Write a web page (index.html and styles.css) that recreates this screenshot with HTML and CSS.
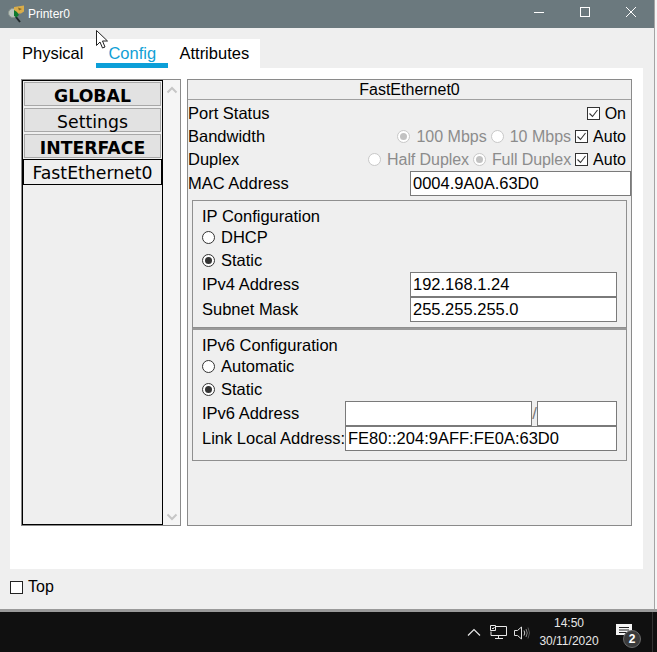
FILE: index.html
```html
<!DOCTYPE html>
<html lang="en">
<head>
<meta charset="utf-8">
<title>Printer0</title>
<link rel="stylesheet" href="styles.css">
</head>
<body>
<div class="screen">
  <div class="window">
    <header class="titlebar">
      <svg class="app-icon" width="20" height="20" viewBox="0 0 20 20">
        <circle cx="6" cy="9" r="4.500" fill="#b9c4bd" stroke="#8b958f"/>
        <path d="M9 13l4 5" stroke="#20282a" stroke-width="2"/>
        <path d="M7 3l10-1.500v6l-3 2h-5l-2-3z" fill="#d9ad4a"/>
        <path d="M11 3.500l4 1.500-3 1.500z" fill="#8a6a24"/>
        <path d="M7 6l3 2 2 3-3 2.500-2-2z" fill="#0e7a2c"/>
      </svg>
      <span class="title">Printer0</span>
      <div class="controls">
        <svg width="12" height="12" viewBox="0 0 12 12" class="ctl"><path d="M1 6.500h10" stroke="#fff" stroke-width="1"/></svg>
        <svg width="12" height="12" viewBox="0 0 12 12" class="ctl"><rect x="1.500" y="1.500" width="9" height="9" fill="none" stroke="#fff"/></svg>
        <svg width="12" height="12" viewBox="0 0 12 12" class="ctl"><path d="M1 1l10 10M11 1l-10 10" stroke="#fff" stroke-width="1"/></svg>
      </div>
    </header>
    <div class="client">
      <nav class="tabs">
        <span class="tab">Physical</span>
        <span class="tab tab-active">Config</span>
        <span class="tab">Attributes</span>
      </nav>
      <div class="page">
        <div class="sidebar">
          <div class="list">
            <div class="list-item list-head">GLOBAL</div>
            <div class="list-item">Settings</div>
            <div class="list-item list-head">INTERFACE</div>
            <div class="list-selected">FastEthernet0</div>
          </div>
          <div class="scroll">
            <svg width="12" height="8" viewBox="0 0 12 8"><path d="M1.500 6.500L6 2l4.500 4.500" fill="none" stroke="#c6c6c6" stroke-width="2"/></svg>
            <svg width="12" height="8" viewBox="0 0 12 8"><path d="M1.500 1.500L6 6l4.500-4.500" fill="none" stroke="#c6c6c6" stroke-width="2"/></svg>
          </div>
        </div>
        <section class="panel">
          <div class="panel-title">FastEthernet0</div>
          <div class="row row-top">
            <span class="label">Port Status</span>
            <span class="opts"><span class="check"><svg width="11" height="11" viewBox="0 0 11 11"><path d="M1.500 5.500l3 3 5-6.500" fill="none" stroke="#333" stroke-width="1.100"/></svg></span><span class="opt-text">On</span></span>
          </div>
          <div class="row">
            <span class="label">Bandwidth</span>
            <span class="opts">
              <span class="radio radio-off"></span><span class="dim">100 Mbps</span>
              <span class="radio"></span><span class="dim">10 Mbps</span>
              <span class="check"><svg width="11" height="11" viewBox="0 0 11 11"><path d="M1.500 5.500l3 3 5-6.500" fill="none" stroke="#333" stroke-width="1.100"/></svg></span><span class="opt-text">Auto</span>
            </span>
          </div>
          <div class="row row-duplex">
            <span class="label">Duplex</span>
            <span class="opts">
              <span class="radio"></span><span class="dim">Half Duplex</span>
              <span class="radio radio-off"></span><span class="dim">Full Duplex</span>
              <span class="check"><svg width="11" height="11" viewBox="0 0 11 11"><path d="M1.500 5.500l3 3 5-6.500" fill="none" stroke="#333" stroke-width="1.100"/></svg></span><span class="opt-text">Auto</span>
            </span>
          </div>
          <div class="row row-mac">
            <span class="label">MAC Address</span>
            <span class="field field-mac">0004.9A0A.63D0</span>
          </div>
          <div class="group">
            <div class="group-title">IP Configuration</div>
            <div class="choice"><span class="radio radio-en"></span>DHCP</div>
            <div class="choice"><span class="radio radio-en radio-sel"></span>Static</div>
            <div class="form-row"><span class="form-label">IPv4 Address</span><span class="field field-wide">192.168.1.24</span></div>
            <div class="form-row"><span class="form-label">Subnet Mask</span><span class="field field-wide">255.255.255.0</span></div>
          </div>
          <div class="group group-six">
            <div class="group-title">IPv6 Configuration</div>
            <div class="choice"><span class="radio radio-en"></span>Automatic</div>
            <div class="choice"><span class="radio radio-en radio-sel"></span>Static</div>
            <div class="form-row form-row-six">
              <span class="form-label">IPv6 Address</span>
              <span class="field field-v6"></span><span class="slash">/</span><span class="field field-prefix"></span>
            </div>
            <div class="form-row form-row-six">
              <span class="form-label">Link Local Address:</span>
              <span class="field field-link">FE80::204:9AFF:FE0A:63D0</span>
            </div>
          </div>
        </section>
      </div>
      <div class="topbar"><span class="top-box"></span><span>Top</span></div>
    </div>
  </div>
  <footer class="taskbar">
    <svg class="tray chev" width="14" height="8" viewBox="0 0 14 8"><path d="M1 7.500l6-6 6 6" fill="none" stroke="#e8e8e8" stroke-width="1.200"/></svg>
    <svg class="tray net" width="17" height="14" viewBox="0 0 17 14"><path d="M5.500 1.500h11v9h-15.500v-4M8.500 10.500v2.500M5 13.500h8M0.500 0.500h5v5h-5zM2 3l1 1 1.500-2" fill="none" stroke="#e8e8e8"/></svg>
    <svg class="tray vol" width="17" height="14" viewBox="0 0 17 14"><path d="M0.500 4.500h3l4-3.500v12l-4-3.500h-3z" fill="none" stroke="#e0e0e0"/><path d="M10 4.500q1.500 2.500 0 5" fill="none" stroke="#ccc"/><path d="M12 3q2.500 4 0 8" fill="none" stroke="#888"/><path d="M14 1.500q3 5.500 0 11" fill="none" stroke="#555"/></svg>
    <div class="clock"><span>14:50</span><span>30/11/2020</span></div>
    <div class="notify">
      <svg width="16" height="15" viewBox="0 0 16 15"><path d="M0 0h16v11h-5l-3 3v-3h-8z" fill="#f4f4f4"/><path d="M3 3.500h10M3 6h10M3 8.500h7" stroke="#222"/></svg>
      <span class="badge">2</span>
    </div>
    <span class="edge"></span>
  </footer>
  <svg class="cursor" width="13" height="21" viewBox="0 0 13 21"><path d="M0.500 0.500v15l3.500-3.500 2.500 6 2.500-1-2.500-6h5z" fill="#fff" stroke="#222"/></svg>
</div>
</body>
</html>
```

FILE: styles.css
```css
* { box-sizing: border-box; }
html, body { margin: 0; padding: 0; }
body { width: 657px; height: 652px; overflow: hidden; background: #fff; font-family: "Liberation Sans", Arial, sans-serif; font-size: 16.5px; color: #000; }
.screen { position: relative; width: 657px; height: 652px; display: flex; flex-direction: column; background: #f5f5f5; }

.window { width: 655px; height: 609px; display: flex; flex-direction: column; background: #efefef; border-right: 1px solid #a4a4a4; }
.titlebar { height: 28px; flex: none; background: #6b797e; display: flex; align-items: center; padding-left: 7px; color: #fff; font-size: 12px; }
.app-icon { flex: none; margin-right: 1px; }
.title { line-height: 26px; height: 26px; }
.controls { margin-left: auto; display: flex; gap: 34px; padding: 0 17px 4px 0; }
.ctl { display: block; }

.client { flex: 1; display: flex; flex-direction: column; padding: 11px 0 0 10px; }
.tabs { display: flex; width: 250px; height: 29px; background: #fff; padding-left: 3px; line-height: 29px; }
.tab { padding: 0 9px; height: 29px; }
.tab:nth-child(2) { width: 72px; padding: 0 0 0 12px; margin-left: 4px; margin-right: 2px; }
.tab-active { color: #119fd6; border-bottom: 5px solid #0c9fd8; }

.page { width: 633px; height: 501px; background: #fff; padding: 11px 11px 0 11px; display: flex; gap: 6px; }
.sidebar { width: 160px; height: 447px; display: flex; border: 1px solid #8a8a8a; background: #efefef; }
.list { width: 141px; height: 445px; border: 1px solid #000; display: flex; flex-direction: column; background: #efefef; font-family: "DejaVu Sans", sans-serif; font-size: 17.300px; }
.list-item { height: 24px; margin: 1px; border: 1px solid #a8a8a8; background: #e2e2e2; text-align: center; line-height: 26px; }
.list-head { font-weight: 700; }
.list-selected { height: 26px; background: #efefef; border: 1px solid #000; line-height: 27px; text-align: center; }
.scroll { flex: 1; display: flex; flex-direction: column; justify-content: space-between; align-items: center; padding: 6px 0 4px; background: #f5f5f5; }
.scroll svg { display: block; }

.panel { width: 445px; height: 447px; border: 1px solid #8a8a8a; background: #efefef; display: flex; flex-direction: column; }
.panel-title { height: 20px; flex: none; border-bottom: 1px solid #a0a0a0; text-align: center; line-height: 19px; font-size: 16px; }
.row { height: 23px; flex: none; display: flex; align-items: center; justify-content: space-between; padding-right: 5px; line-height: 23px; }
.row-top { margin-top: 2px; }
.row-mac { height: 25px; padding-right: 0; }
.opts { display: flex; align-items: center; font-size: 16px; }
.opt-text { margin-left: 5px; }
.dim { color: #8c8c8c; margin: 0 4px 0 6px; }
.row-duplex .dim { letter-spacing: -0.08px; }
.check { width: 13px; height: 13px; border: 1px solid #333; background: #fff; display: flex; align-items: center; justify-content: center; }
.check svg { display: block; }
.radio { width: 13px; height: 13px; flex: none; border-radius: 50%; border: 1px solid #c8c8c8; background: #fff; display: inline-block; position: relative; }
.radio-off::after { content: ""; position: absolute; left: 2px; top: 2px; width: 7px; height: 7px; border-radius: 50%; background: #c2c2c2; }
.radio-en { border-color: #333; margin-right: 6px; }
.radio-sel::after { content: ""; position: absolute; left: 2px; top: 2px; width: 7px; height: 7px; border-radius: 50%; background: #333; }
.field { display: block; height: 25px; border: 1px solid #7a7a7a; background: #fff; line-height: 23px; padding-left: 2px; }
.field-mac { width: 221px; }

.group { width: 435px; height: 128px; margin: 4px 0 0 4px; border: 1px solid #8f8f8f; padding: 6px 9px 0; flex: none; }
.group-six { height: 133px; margin-top: 0; border-top: 2px solid #999; }
.group-title { height: 19px; line-height: 18px; }
.choice { height: 23px; display: flex; align-items: center; line-height: 23px; }
.form-row { display: flex; align-items: center; height: 25px; }
.form-label { width: 208px; flex: none; white-space: nowrap; }
.form-row-six .form-label { width: 143px; }
.field-wide { width: 207px; }
.field-v6 { width: 187px; }
.slash { width: 5px; text-align: center; color: #777; }
.field-prefix { width: 80px; }
.field-link { width: 272px; }

.topbar { flex: none; height: 36px; display: flex; align-items: center; gap: 5px; font-size: 16px; }
.top-box { width: 13px; height: 13px; border: 1px solid #222; background: #fff; }

.taskbar { position: relative; height: 43px; flex: none; border-top: 3px solid #9a9a9a; background: #101010; display: flex; align-items: center; color: #e8e8e8; font-size: 12px; }
.tray { position: absolute; display: block; }
.chev { left: 467px; top: 16px; }
.net { left: 490px; top: 13px; }
.vol { left: 514px; top: 14px; }
.clock { position: absolute; left: 534px; width: 70px; top: 2px; display: flex; flex-direction: column; align-items: center; line-height: 18px; }
.notify { position: absolute; left: 616px; top: 12px; }
.notify svg { display: block; }
.badge { position: absolute; left: 7px; top: 6px; width: 18px; height: 18px; border-radius: 50%; background: #3a3a3a; border: 1px solid #6a6a6a; color: #fff; font-size: 12px; font-weight: 700; line-height: 16px; text-align: center; }
.edge { position: absolute; left: 652px; top: 0; width: 1px; height: 40px; background: #333; }

.cursor { position: absolute; left: 96px; top: 30px; }
```
